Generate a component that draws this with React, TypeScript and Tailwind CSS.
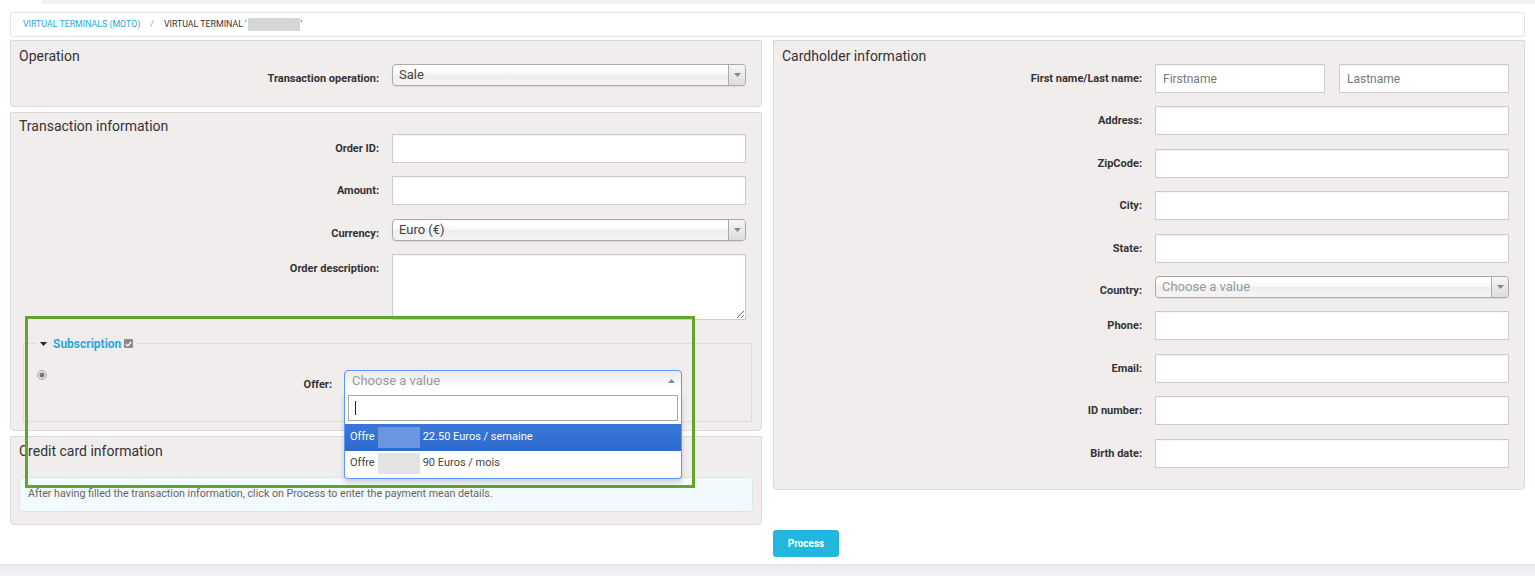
import React from "react";

const panel =
  "border border-[#dadada] rounded-b-[4px] bg-[#f2eded]";

function Caret({ up = false }: { up?: boolean }) {
  return (
    <svg width="7" height="4" viewBox="0 0 7 4">
      <path d={up ? "M0 4 L3.5 0 L7 4 Z" : "M0 0 L7 0 L3.5 4 Z"} fill="#888" />
    </svg>
  );
}

function Select({ value, placeholder = false }: { value: string; placeholder?: boolean }) {
  return (
    <div className="flex h-[22px] w-full items-stretch rounded-[4px] border border-[#aaa] bg-[linear-gradient(#fff_20%,#f6f6f6_50%,#eee_52%,#f4f4f4_100%)] shadow-[0_1px_1px_rgba(0,0,0,0.08)]">
      <span
        className={`flex flex-1 items-center pl-[6px] text-[13px] ${
          placeholder ? "text-[#999]" : "text-[#444]"
        }`}
      >
        {value}
      </span>
      <span className="flex w-[17px] items-center justify-center rounded-r-[4px] border-l border-[#aaa] bg-[linear-gradient(#f6f6f6,#dcdcdc)]">
        <Caret />
      </span>
    </div>
  );
}

function TextInput({ placeholder = "" }: { placeholder?: string }) {
  return (
    <div className="flex h-[29px] w-full items-center border border-[#ccc] bg-white px-[7px] text-[12px] text-[#777] shadow-[inset_0_1px_1px_rgba(0,0,0,0.05)]">
      {placeholder}
    </div>
  );
}

function Row({ label, children }: { label: string; children: React.ReactNode }) {
  return (
    <div className="mb-[13.4px] flex items-start">
      <div className="w-[381px] shrink-0 pr-[13px] pt-[8px] text-right text-[11px] font-bold leading-[14px] text-[#333]">
        {label}
      </div>
      <div className="w-[354px] shrink-0">{children}</div>
    </div>
  );
}

function Title({ children }: { children: React.ReactNode }) {
  return <div className="h-[16px] pl-[8px] text-[14px] leading-[16px] text-[#333]">{children}</div>;
}

export default function App() {
  return (
    <div className="relative min-h-[576px] bg-white font-['Roboto','Liberation_Sans',sans-serif]">
      <div className="ml-[42px] h-[4px] bg-[#f2f3f7]" />

      <div className="px-[10px]">
        {/* breadcrumb */}
        <div className="mt-[8px] flex h-[25px] items-center rounded-[3px] border border-[#e3e3e3] bg-white pl-[12px] text-[8.8px] uppercase">
          <span className="text-[#2aa6d4]">Virtual terminals (moto)</span>
          <span className="mx-[10px] text-[#999]">/</span>
          <span className="text-[#333]">Virtual terminal '</span>
          <span className="mx-[1px] inline-block h-[13px] w-[52px] bg-[#d6d6d6]" />
          <span className="text-[#333]">'</span>
        </div>

        <div className="mt-[3px] flex items-start gap-[11px]">
          {/* left column */}
          <div className="flex w-[752px] flex-col gap-[5px]">
            <div className={`${panel} h-[67px] pt-[7px]`}>
              <Title>Operation</Title>
              <Row label="Transaction operation:">
                <Select value="Sale" />
              </Row>
            </div>

            <div className={`${panel} pt-[5px] pb-[8px]`}>
              <Title>Transaction information</Title>
              <Row label="Order ID:">
                <TextInput />
              </Row>
              <Row label="Amount:">
                <TextInput />
              </Row>
              <Row label="Currency:">
                <Select value="Euro (€)" />
              </Row>
              <Row label="Order description:">
                <textarea
                  readOnly
                  className="block h-[66px] w-full border border-[#ccc] bg-white shadow-[inset_0_1px_1px_rgba(0,0,0,0.05)] outline-none"
                />
              </Row>

              <fieldset className="ml-[12px] mr-[9px] mt-[1px] h-[88px] border border-[#dcdcdc] pl-[13px]">
                <legend className="flex items-center px-[3px]">
                  <svg width="7" height="4" viewBox="0 0 7 4" className="mr-[6px]">
                    <path d="M0 0 L7 0 L3.5 4 Z" fill="#222" />
                  </svg>
                  <span className="text-[12px] font-bold leading-[20px] text-[#2aa9d9]">Subscription</span>
                  <span className="ml-[3px] flex h-[9px] w-[9px] items-center justify-center rounded-[1px] bg-[#8c8c8c]">
                    <svg width="7" height="6" viewBox="0 0 7 6">
                      <path d="M0.8 3 L2.7 4.9 L6.2 1" stroke="#fff" strokeWidth="1.3" fill="none" />
                    </svg>
                  </span>
                </legend>
                <div className="mt-[16px] flex items-start">
                  <svg width="10" height="10" viewBox="0 0 10 10" className="shrink-0">
                    <circle cx="5" cy="5" r="4.5" fill="#e6e6e6" stroke="#a6a6a6" />
                    <circle cx="5" cy="5" r="2.5" fill="#7a7a7a" />
                  </svg>
                  <div className="flex-1 pr-[12px] pt-[8px] text-right text-[11px] font-bold leading-[14px] text-[#333]">
                    Offer:
                  </div>
                  <div className="relative mr-[69px] w-[338px] shrink-0">
                    <div className="flex h-[23px] items-center rounded-t-[4px] border border-[#5897fb] bg-[linear-gradient(#eee_20%,#fff_80%)]">
                      <span className="flex-1 pl-[7px] text-[13px] text-[#999]">Choose a value</span>
                      <span className="mr-[6px] flex items-center">
                        <Caret up />
                      </span>
                    </div>
                    <div className="absolute left-0 top-[22px] z-10 w-[338px] rounded-b-[4px] border border-t-0 border-[#5897fb] bg-white pb-[1px] shadow-[0_4px_5px_rgba(0,0,0,0.15)]">
                      <div className="mx-[3px] mt-[3px] flex h-[26px] items-center border border-[#aaa] bg-white pl-[6px]">
                        <span className="h-[14px] w-[1px] bg-[#222]" />
                      </div>
                      <div className="mt-[3px] flex h-[27px] items-center bg-[linear-gradient(#3875d7_20%,#2f6bcf_90%)] pl-[5px] text-[11px] text-white">
                        <span>Offre</span>
                        <span className="mx-[3px] inline-block h-[21px] w-[42px] bg-[#6b95e0]" />
                        <span>22.50 Euros / semaine</span>
                      </div>
                      <div className="flex h-[26px] items-center pl-[5px] text-[11px] text-[#444]">
                        <span>Offre</span>
                        <span className="mx-[3px] inline-block h-[21px] w-[42px] bg-[#e3e3e3]" />
                        <span>90 Euros / mois</span>
                      </div>
                    </div>
                  </div>
                </div>
              </fieldset>
            </div>

            <div className={`${panel} pt-[6px] pb-[12px]`}>
              <Title>Credit card information</Title>
              <div className="mx-[8px] mt-[18px] flex h-[35px] items-center rounded-[4px] border border-[#d9e7ec] bg-[#f3fafd] pl-[8px] text-[10.7px] text-[#666]">
                After having filled the transaction information, click on Process to enter the payment mean details.
              </div>
            </div>
          </div>

          {/* right column */}
          <div className={`${panel} w-[752px] pt-[7px] pb-[8px]`}>
            <Title>Cardholder information</Title>
            <Row label="First name/Last name:">
              <div className="flex gap-[14px]">
                <div className="w-[170px]">
                  <TextInput placeholder="Firstname" />
                </div>
                <div className="w-[170px]">
                  <TextInput placeholder="Lastname" />
                </div>
              </div>
            </Row>
            <Row label="Address:">
              <TextInput />
            </Row>
            <Row label="ZipCode:">
              <TextInput />
            </Row>
            <Row label="City:">
              <TextInput />
            </Row>
            <Row label="State:">
              <TextInput />
            </Row>
            <Row label="Country:">
              <Select value="Choose a value" placeholder />
            </Row>
            <Row label="Phone:">
              <TextInput />
            </Row>
            <Row label="Email:">
              <TextInput />
            </Row>
            <Row label="ID number:">
              <TextInput />
            </Row>
            <Row label="Birth date:">
              <TextInput />
            </Row>
          </div>
        </div>

        <div className="mt-[5px] pl-[763px]">
          <button className="h-[27px] w-[66px] rounded-[3px] bg-[#22b8de] text-[10px] font-bold text-white">
            Process
          </button>
        </div>
      </div>

      <div className="mt-[7px] h-[13px] bg-[linear-gradient(#e9eaef,#f3f4f8)]" />

      {/* highlight annotation */}
      <div className="pointer-events-none absolute left-[25px] top-[316px] h-[172px] w-[670px] border-[3px] border-[#63a42d]" />
    </div>
  );
}
